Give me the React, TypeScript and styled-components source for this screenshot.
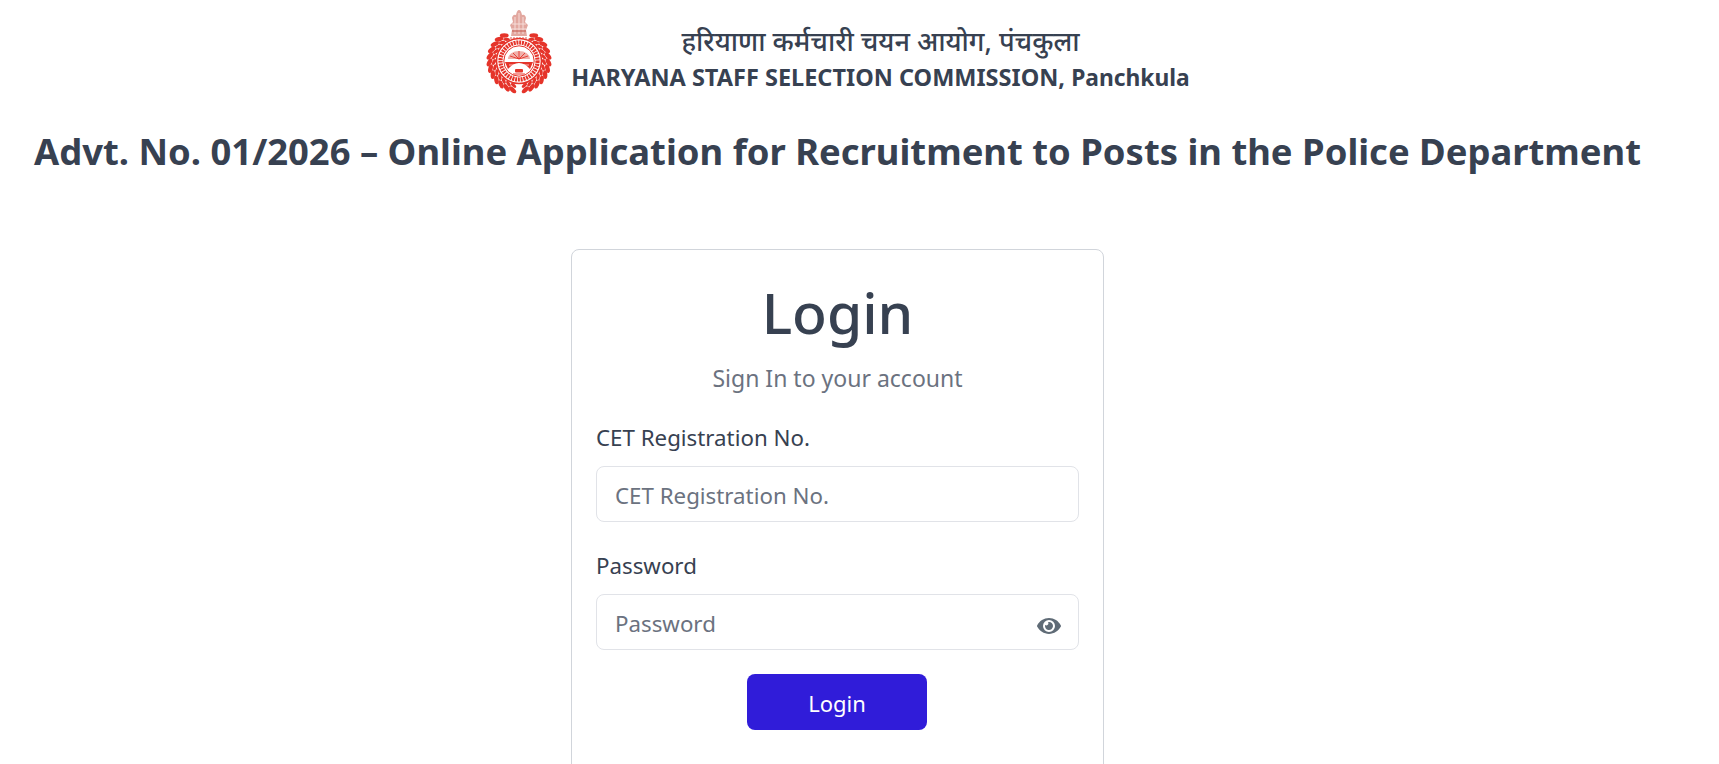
import { useState } from "react";
import styled, { createGlobalStyle } from "styled-components";
import { FaEye } from "react-icons/fa";

const GlobalStyle = createGlobalStyle`
  html, body {
    margin: 0;
    height: 100%;
    overflow: hidden;
    background: #fff;
  }
  body {
    font-family: "Noto Sans", "Open Sans", "Noto Sans CJK SC", sans-serif;
    color: #374151;
  }
  * { box-sizing: border-box; }
`;

const Page = styled.main`
  display: flex;
  flex-direction: column;
  align-items: center;
  padding-right: 44px;
`;

const Header = styled.header`
  display: flex;
  align-items: flex-start;
  gap: 18px;
  height: 102px;
  padding-top: 9px;
`;

const HeaderText = styled.div`
  display: flex;
  flex-direction: column;
  align-items: center;
  margin-top: 14px;
`;

const HindiName = styled.div`
  font-size: 27px;
  line-height: 36px;
  font-weight: 500;
`;

const EnglishName = styled.div`
  font-size: 23.5px;
  line-height: 36px;
  font-weight: 700;
  white-space: nowrap;

  span {
    font-size: 22.8px;
  }
`;

const Title = styled.h1`
  margin: 24px 0 0;
  font-size: 36.4px;
  line-height: 50px;
  font-weight: 700;
  color: #374151;
  white-space: nowrap;
`;

const Card = styled.section`
  width: 533px;
  height: 600px;
  margin-top: 73px;
  padding: 24px;
  border: 1px solid #d1d5db;
  border-radius: 8px;
  display: flex;
  flex-direction: column;
`;

const CardTitle = styled.h2`
  margin: 0;
  font-size: 57px;
  line-height: 76px;
  font-weight: 500;
  text-align: center;
  color: #374151;
`;

const CardSub = styled.p`
  margin: 12px 0 0;
  font-size: 23px;
  line-height: 32px;
  text-align: center;
  color: #6b7280;
`;

const Field = styled.div`
  margin-top: 29px;
  display: flex;
  flex-direction: column;
  gap: 13px;
`;

const Label = styled.label`
  font-size: 22.3px;
  line-height: 30px;
  color: #374151;
`;

const InputWrap = styled.div`
  position: relative;
`;

const Input = styled.input`
  width: 100%;
  height: 56px;
  padding: 3px 18px 0;
  border: 1px solid #e1e3e8;
  border-radius: 8px;
  outline: none;
  background: #fff;
  font: inherit;
  font-size: 22.3px;
  color: #374151;

  &::placeholder {
    color: #6b7280;
    opacity: 1;
  }
`;

const EyeButton = styled.button`
  position: absolute;
  right: 18px;
  top: 20px;
  display: flex;
  padding: 0;
  border: 0;
  background: none;
  color: #5f6b76;
  font-size: 24px;
`;

const Submit = styled.button`
  align-self: center;
  width: 180px;
  height: 56px;
  margin: 24px 1px 0 0;
  padding-top: 2px;
  border: 0;
  border-radius: 8px;
  background: #301cd9;
  color: #fff;
  font: inherit;
  font-size: 22px;
`;

// seal is centred on (34, 52), the wreath runs down both sides of it
const leafAngles = Array.from({ length: 12 }, (_, i) => 30 + i * 12.5);

function Leaves({ radius, size }: { radius: number; size: number }) {
  return (
    <>
      {leafAngles.map((deg) => {
        const a = (deg * Math.PI) / 180;
        const dx = radius * Math.sin(a);
        const dy = -radius * Math.cos(a);
        return (
          <g key={deg} fill="#e5342a">
            <ellipse cx={34 + dx} cy={52 + dy} rx={size * 0.5} ry={size} transform={`rotate(${deg + 60} ${34 + dx} ${52 + dy})`} />
            <ellipse cx={34 - dx} cy={52 + dy} rx={size * 0.5} ry={size} transform={`rotate(${-deg - 60} ${34 - dx} ${52 + dy})`} />
          </g>
        );
      })}
    </>
  );
}

function Emblem() {
  return (
    <svg width="68" height="86" viewBox="0 0 68 86" aria-label="Haryana emblem">
      {/* lion capital */}
      <g fill="#e2a79f">
        <path d="M27 9 Q28 5 31 6 Q32 1 34 1 Q36 1 37 6 Q40 5 41 9 L40 13 L43 16 L41 21 L42 27 H26 L27 21 L25 16 L28 13 Z" />
      </g>
      <path d="M30 8 V25 M34 4 V25 M38 8 V25 M27 15 H41 M27 20 H41" stroke="#f6ddd9" strokeWidth="1" fill="none" />
      <path d="M27 22 H41" stroke="#c9655c" strokeWidth="1.2" />
      <path d="M25 29 H43" stroke="#eb8f88" strokeWidth="1.4" strokeDasharray="2 1" />
      <Leaves radius={29.5} size={4.4} />
      <Leaves radius={25} size={3.2} />
      {/* seal */}
      <circle cx="34" cy="52" r="22.5" fill="#fff" stroke="#e5342a" strokeWidth="1.6" />
      <circle cx="34" cy="52" r="18.5" fill="none" stroke="#e5342a" strokeWidth="4.2" strokeDasharray="2 0.8" />
      <circle cx="34" cy="52" r="15.2" fill="#fff" stroke="#e5342a" strokeWidth="1" />
      {/* wheel and lotus */}
      <path d="M23 50 A11 8 0 0 1 45 50 Z" fill="#f0b0aa" />
      <path d="M34 42 V50 M28 44 L34 50 L40 44 M25 47 L34 50 L43 47" stroke="#e5342a" strokeWidth="0.9" fill="none" />
      {/* fields and water */}
      <path d="M20 53 H48 L45 60 Q40 54 34 54 Q28 54 23 60 Z" fill="#e5342a" />
      <path d="M24 56 H30 M38 56 H44" stroke="#fff" strokeWidth="0.7" />
      <rect x="30" y="60" width="8" height="3.5" rx="1" fill="#e5342a" />
      <path d="M28 65 H40" stroke="#e5342a" strokeWidth="1" />
    </svg>
  );
}

export default function App() {
  const [registration, setRegistration] = useState("");
  const [password, setPassword] = useState("");
  const [showPassword, setShowPassword] = useState(false);

  return (
    <Page>
      <GlobalStyle />
      <Header>
        <Emblem />
        <HeaderText>
          <HindiName>हरियाणा कर्मचारी चयन आयोग, पंचकुला</HindiName>
          <EnglishName>HARYANA STAFF SELECTION COMMISSION, <span>Panchkula</span></EnglishName>
        </HeaderText>
      </Header>
      <Title>Advt. No. 01/2026 – Online Application for Recruitment to Posts in the Police Department</Title>
      <Card>
        <CardTitle>Login</CardTitle>
        <CardSub>Sign In to your account</CardSub>
        <Field>
          <Label htmlFor="cet">CET Registration No.</Label>
          <Input
            id="cet"
            placeholder="CET Registration No."
            value={registration}
            onChange={(e) => setRegistration(e.target.value)}
          />
        </Field>
        <Field>
          <Label htmlFor="password">Password</Label>
          <InputWrap>
            <Input
              id="password"
              type={showPassword ? "text" : "password"}
              placeholder="Password"
              value={password}
              onChange={(e) => setPassword(e.target.value)}
            />
            <EyeButton type="button" aria-label="Show password" onClick={() => setShowPassword(!showPassword)}>
              <FaEye />
            </EyeButton>
          </InputWrap>
        </Field>
        <Submit type="button">Login</Submit>
      </Card>
    </Page>
  );
}
